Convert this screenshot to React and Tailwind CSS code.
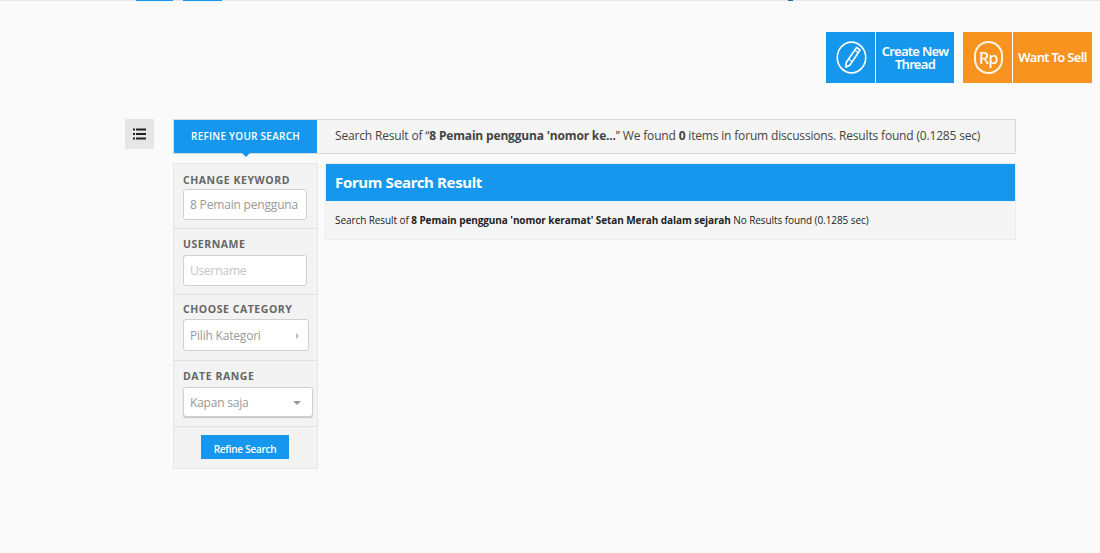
const openSans = "font-['Open_Sans','Liberation_Sans',sans-serif]";

function PencilIcon() {
  return (
    <svg width="31" height="33" viewBox="0 0 31 33" fill="none" stroke="white">
      <ellipse cx="15.5" cy="16.5" rx="14.2" ry="15.4" strokeWidth="1.6" />
      <path d="M20.5 6.5l3.5 2.5-10 15-4.2 2.2.4-4.7z" strokeWidth="1.6" strokeLinejoin="round" />
      <path d="M18.8 9.2l3.5 2.5M12.5 18l3.5 2.5" strokeWidth="1.1" />
    </svg>
  );
}

function ListIcon() {
  return (
    <svg width="13" height="12" viewBox="0 0 13 12" fill="#222">
      <rect x="0" y="0.5" width="2" height="2" />
      <rect x="3" y="0.5" width="10" height="2" />
      <rect x="0" y="5" width="2" height="2" />
      <rect x="3" y="5" width="10" height="2" />
      <rect x="0" y="9.5" width="2" height="2" />
      <rect x="3" y="9.5" width="10" height="2" />
    </svg>
  );
}

function ActionButton({ color, icon, children }) {
  return (
    <div className={`flex h-[51px] ${color} text-white`}>
      <div className="flex w-[50px] items-center justify-center border-r border-white pl-[2px]">{icon}</div>
      <div className="flex flex-1 items-center justify-center text-center font-['Noto_Sans',sans-serif] text-[13px] font-semibold leading-[13px] tracking-[-0.7px]">
        {children}
      </div>
    </div>
  );
}

function FilterSection({ label, top, gap, bottom, children }) {
  return (
    <div className={`border-b border-[#e0e0e0] pl-[9px] ${top} ${bottom}`}>
      <div className={`${gap} text-[10.5px] font-bold leading-[15px] tracking-[0.55px] text-[#666]`}>{label}</div>
      {children}
    </div>
  );
}

export default function App() {
  return (
    <div className={`min-h-[553px] bg-[#fafafa] ${openSans}`}>
      {/* top nav remnant */}
      <div className="relative h-[1px] bg-[#e8e8e8]">
        <div className="absolute left-[136px] top-0 h-[1px] w-[37px] bg-[#1597ed]" />
        <div className="absolute left-[183px] top-0 h-[1px] w-[39px] bg-[#1597ed]" />
        <div className="absolute left-[788px] top-0 h-[1px] w-[5px] bg-[#1a6f96]" />
      </div>

      <div className="flex justify-end gap-[9px] pt-[31px] pr-2">
        <div className="w-[128px]">
          <ActionButton color="bg-[#1597ed]" icon={<PencilIcon />}>
            <span>Create New<br />Thread</span>
          </ActionButton>
        </div>
        <div className="w-[129px]">
          <ActionButton
            color="bg-[#f7931e]"
            icon={
              <div className="flex h-[33px] w-[29px] items-center justify-center rounded-full border-2 border-white/90 font-['Noto_Sans',sans-serif] text-[16px] font-medium leading-none tracking-[-0.6px]">
                Rp
              </div>
            }
          >
            Want To Sell
          </ActionButton>
        </div>
      </div>

      <div className="mt-9 flex pl-[125px]">
        <div className="mr-[19px] flex h-[30px] w-[29px] items-center justify-center bg-[#e6e6e6]">
          <ListIcon />
        </div>

        <div className="w-[843px]">
          {/* result summary bar */}
          <div className="flex h-[35px] items-center border border-[#d9d9d9] bg-[#f5f5f5]">
            <div className="relative flex h-[33px] w-[143px] items-center justify-center bg-[#1597ed] text-[10px] font-semibold tracking-[0.25px] text-white">
              REFINE YOUR SEARCH
              <div className="absolute top-full left-1/2 -ml-[4px] h-0 w-0 border-x-[4px] border-t-[4px] border-x-transparent border-t-[#1597ed]" />
            </div>
            <div className="pb-[2px] pl-[18px] text-[12px] tracking-[-0.17px] text-[#444]">
              Search Result of “<b>8 Pemain pengguna 'nomor ke...</b>” We found <b>0</b> items in forum discussions. Results found (0.1285 sec)
            </div>
          </div>

          <div className="mt-[9px] flex items-start gap-[7px]">
            {/* filters */}
            <div className="w-[145px] border border-[#e6e6e6] bg-[#f3f3f3]">
              <FilterSection label="CHANGE KEYWORD" top="pt-[9px]" gap="mb-[1px]" bottom="pb-2">
                <div className="flex h-[31px] w-[124px] items-center overflow-hidden whitespace-nowrap rounded-[3px] border border-[#d0d0d0] bg-white pl-[6px] text-[12px] tracking-[-0.18px] text-[#999]">
                  8 Pemain pengguna
                </div>
              </FilterSection>
              <FilterSection label="USERNAME" top="pt-2" gap="mb-[3px]" bottom="pb-2">
                <div className="flex h-[31px] w-[124px] items-center rounded-[3px] border border-[#d0d0d0] bg-white pl-[6px] text-[12px] tracking-[-0.2px] text-[#c4c4c4]">
                  Username
                </div>
              </FilterSection>
              <FilterSection label="CHOOSE CATEGORY" top="pt-[7px]" gap="mb-[2px]" bottom="pb-[9px]">
                <div className="flex h-[32px] w-[126px] items-center justify-between rounded-[3px] border border-[#d0d0d0] bg-white pt-[2px] pr-[9px] pl-[6px] text-[12px] tracking-[-0.2px] text-[#999]">
                  Pilih Kategori
                  <div className="h-0 w-0 border-y-[3px] border-l-[3px] border-y-transparent border-l-[#bbb]" />
                </div>
              </FilterSection>
              <FilterSection label="DATE RANGE" top="pt-2" gap="mb-[3px]" bottom="pb-[9px]">
                <div className="flex h-[30px] w-[130px] items-center justify-between rounded-[3px] border border-[#d0d0d0] bg-white pt-[1px] pr-[11px] pl-[6px] text-[12px] tracking-[-0.2px] text-[#999] shadow-[0_1px_1px_rgba(0,0,0,0.2)]">
                  Kapan saja
                  <div className="h-0 w-0 border-x-[4px] border-t-[4px] border-x-transparent border-t-[#999]" />
                </div>
              </FilterSection>
              <div className="flex pt-2 pb-[9px] pl-[27px]">
                <div className="flex h-[24px] w-[88px] items-center justify-center bg-[#1597ed] pt-[5px] text-[10px] font-semibold tracking-[-0.25px] text-white">
                  Refine Search
                </div>
              </div>
            </div>

            {/* results */}
            <div className="flex-1 border border-[#ececec] bg-[#f5f5f5]">
              <div className="flex h-[37px] items-center bg-[#1597ed] pl-[9px] font-['Noto_Sans',sans-serif] text-[15px] font-bold tracking-[-0.35px] text-white">
                Forum Search Result
              </div>
              <div className="flex h-[38px] items-center pl-[9px] text-[10px] tracking-[-0.08px] text-[#222]">
                <span>
                  Search Result of <b>8 Pemain pengguna 'nomor keramat' Setan Merah dalam sejarah</b> No Results found (0.1285 sec)
                </span>
              </div>
            </div>
          </div>
        </div>
      </div>
    </div>
  );
}
